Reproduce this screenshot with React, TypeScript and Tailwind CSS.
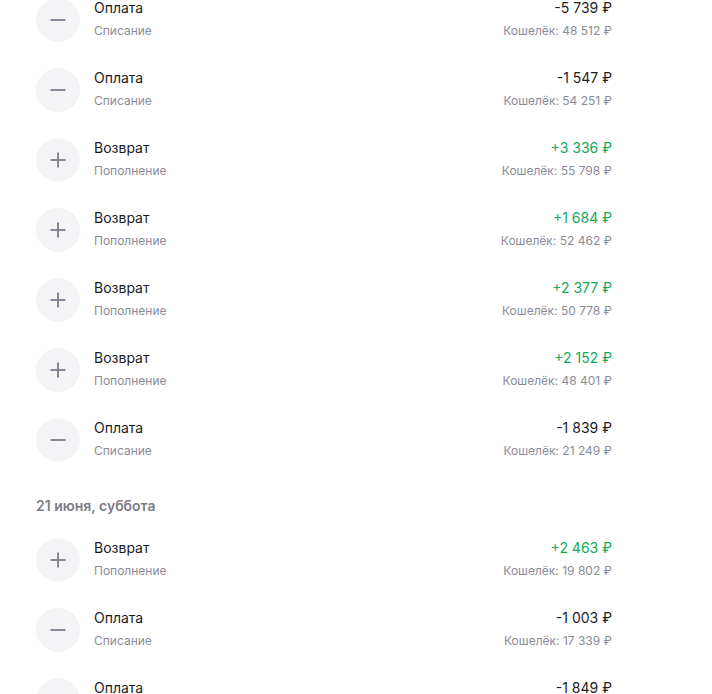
type Tx = { kind: 'in' | 'out'; amount: string; wallet: string }

const groups: { date?: string; items: Tx[] }[] = [
  {
    items: [
      { kind: 'out', amount: '-5 739 ₽', wallet: '48 512 ₽' },
      { kind: 'out', amount: '-1 547 ₽', wallet: '54 251 ₽' },
      { kind: 'in', amount: '+3 336 ₽', wallet: '55 798 ₽' },
      { kind: 'in', amount: '+1 684 ₽', wallet: '52 462 ₽' },
      { kind: 'in', amount: '+2 377 ₽', wallet: '50 778 ₽' },
      { kind: 'in', amount: '+2 152 ₽', wallet: '48 401 ₽' },
      { kind: 'out', amount: '-1 839 ₽', wallet: '21 249 ₽' },
    ],
  },
  {
    date: '21 июня, суббота',
    items: [
      { kind: 'in', amount: '+2 463 ₽', wallet: '19 802 ₽' },
      { kind: 'out', amount: '-1 003 ₽', wallet: '17 339 ₽' },
      { kind: 'out', amount: '-1 849 ₽', wallet: '15 490 ₽' },
    ],
  },
]

function Icon({ kind }: { kind: 'in' | 'out' }) {
  return (
    <div className="w-[44px] h-[44px] rounded-full bg-[#f4f4f6] flex items-center justify-center shrink-0">
      <svg width="16" height="16" viewBox="0 0 16 16" fill="none">
        <path d="M0.5 8h15" stroke="#7b7b8c" strokeWidth="1.8" />
        {kind === 'in' && <path d="M8 0.5v15" stroke="#7b7b8c" strokeWidth="1.8" />}
      </svg>
    </div>
  )
}

function Row({ tx }: { tx: Tx }) {
  const isIn = tx.kind === 'in'
  return (
    <div className="flex items-start h-[44px]">
      <Icon kind={tx.kind} />
      <div className="ml-[14px] pt-[1px] flex-1 flex flex-col">
        <div className="text-[14px] leading-[18px] text-[#1c1c1f]">{isIn ? 'Возврат' : 'Оплата'}</div>
        <div className="text-[12px] leading-[16px] mt-[6px] text-[#8b8b98]">{isIn ? 'Пополнение' : 'Списание'}</div>
      </div>
      <div className="pt-[1px] flex flex-col items-end">
        <div className={`text-[14px] leading-[18px] ${isIn ? 'text-[#14a85d]' : 'text-[#1c1c1f]'}`}>{tx.amount}</div>
        <div className="text-[12px] leading-[16px] mt-[6px] text-[#8b8b98]">Кошелёк: {tx.wallet}</div>
      </div>
    </div>
  )
}

export default function App(): JSX.Element {
  return (
    <div className="min-h-screen bg-white" style={{ fontFamily: 'Inter, "Noto Sans", sans-serif' }}>
      <div className="w-[576px] ml-[36px] -mt-[2px] h-[696px] overflow-hidden">
        {groups.map((g, gi) => (
          <div key={gi} className="flex flex-col">
            {g.date && (
              <div className="mt-[36px] mb-[24px] text-[14px] leading-[16px] font-semibold text-[#7c7c8a]">{g.date}</div>
            )}
            <div className="flex flex-col gap-[26px]">
              {g.items.map((tx, i) => (
                <Row key={i} tx={tx} />
              ))}
            </div>
          </div>
        ))}
      </div>
    </div>
  )
}
